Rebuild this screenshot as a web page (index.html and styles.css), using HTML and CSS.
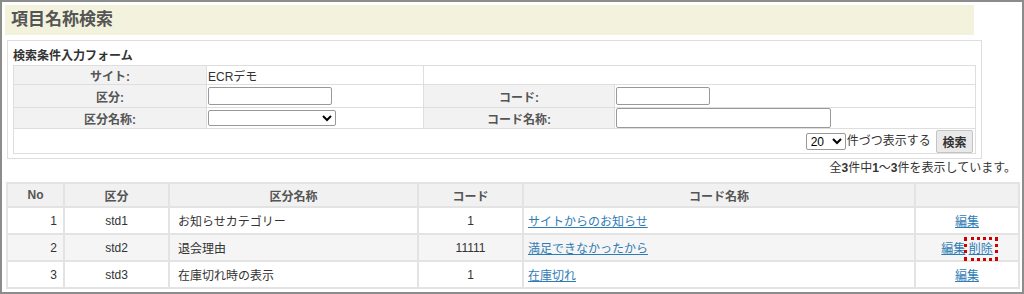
FILE: index.html
```html
<!DOCTYPE html>
<html lang="ja">
<head>
    <meta charset="UTF-8">
    <title>項目名称検索</title>
    <link rel="stylesheet" href="styles.css">
</head>
<body>
    <div class="frame">
        <h1 class="page-title">項目名称検索</h1>

        <div class="search-box">
            <h2 class="search-title">検索条件入力フォーム</h2>
            <table class="form-table">
                <tr class="row-site">
                    <th class="c1">サイト:</th>
                    <td class="c2">ECRデモ</td>
                    <td class="c3" colspan="2"></td>
                </tr>
                <tr class="row-kubun">
                    <th>区分:</th>
                    <td><input type="text" class="in-kubun"></td>
                    <th class="c3">コード:</th>
                    <td><input type="text" class="in-code"></td>
                </tr>
                <tr class="row-name">
                    <th>区分名称:</th>
                    <td><select class="sel-name"><option></option></select></td>
                    <th>コード名称:</th>
                    <td><input type="text" class="in-codename"></td>
                </tr>
                <tr class="row-submit">
                    <td colspan="4" class="submit-cell">
                        <select class="sel-count"><option>20</option></select>件づつ表示する
                        <button class="btn-search">検索</button>
                    </td>
                </tr>
            </table>
        </div>

        <div class="count">全<b>3</b>件中<b>1</b>〜<b>3</b>件を表示しています。</div>

        <table class="list">
            <tr>
                <th class="col-no">No</th>
                <th class="col-kubun">区分</th>
                <th class="col-kname">区分名称</th>
                <th class="col-code">コード</th>
                <th class="col-cname">コード名称</th>
                <th class="col-act"></th>
            </tr>
            <tr>
                <td class="num">1</td>
                <td class="mid">std1</td>
                <td class="name">お知らせカテゴリー</td>
                <td class="mid">1</td>
                <td class="link"><a href="#">サイトからのお知らせ</a></td>
                <td class="mid"><a href="#">編集</a></td>
            </tr>
            <tr class="alt">
                <td class="num">2</td>
                <td class="mid">std2</td>
                <td class="name">退会理由</td>
                <td class="mid">11111</td>
                <td class="link"><a href="#">満足できなかったから</a></td>
                <td class="mid"><a href="#">編集</a> <a href="#" class="marked">削除</a></td>
            </tr>
            <tr>
                <td class="num">3</td>
                <td class="mid">std3</td>
                <td class="name">在庫切れ時の表示</td>
                <td class="mid">1</td>
                <td class="link"><a href="#">在庫切れ</a></td>
                <td class="mid"><a href="#">編集</a></td>
            </tr>
        </table>
    </div>
</body>
</html>
```

FILE: styles.css
```css
body {
    margin: 0;
    font-family: "Liberation Sans", "Noto Sans CJK JP", sans-serif;
    font-size: 12px;
    color: #333;
    background: white;
}
.frame {
    height: 294px;
    box-sizing: border-box;
    border: 2px solid #8c8c8c;
    overflow: hidden;
}
.page-title {
    margin: 3px 48px 0 3px;
    height: 30px;
    line-height: 30px;
    padding-left: 6px;
    background: #f3f3dd;
    color: #555;
    font-size: 17px;
    font-weight: bold;
}
.search-box {
    margin: 5px 40px 0 5px;
    border: 1px solid #dedede;
    padding: 6px 4px 4px 5px;
}
.search-title {
    margin: 0;
    font-size: 12px;
    line-height: 18px;
    font-weight: bold;
    color: #333;
}
.form-table {
    width: 963px;
    border-collapse: collapse;
}
.form-table th,
.form-table td {
    border: 1px solid #dedede;
    padding: 0 1px;
    font-size: 12px;
}
.form-table th {
    background: #f2f2f2;
    color: #555;
    font-weight: bold;
    text-align: center;
}
.form-table .c1 { width: 190px; }
.form-table .c2 { width: 214px; }
.form-table .c3 { width: 188px; }
.row-site { height: 19px; }
.row-kubun { height: 23px; }
.row-name { height: 21px; }
.row-submit { height: 25px; }
.form-table input {
    margin: 0;
    height: 18px;
    box-sizing: border-box;
    border: 1px solid #999;
    border-radius: 2px;
    vertical-align: middle;
}
.in-kubun { width: 124px; }
.in-code { width: 94px; }
.in-codename { width: 215px; height: 20px !important; }
.sel-name {
    width: 128px;
    height: 16px;
    margin: 0;
    font-size: 11px;
    border: 1px solid #999;
    border-radius: 2px;
    background: white;
    vertical-align: middle;
}
.submit-cell {
    text-align: right;
    padding-right: 2px !important;
}
.sel-count {
    width: 40px;
    height: 17px;
    margin: 0 1px 0 0;
    padding: 0;
    font-size: 12px;
    font-family: "Liberation Sans", sans-serif;
    border: 1px solid #999;
    border-radius: 2px;
    background: white;
    vertical-align: middle;
}
.btn-search {
    width: 37px;
    height: 23px;
    margin-left: 2px;
    padding: 0;
    font-family: "Liberation Sans", "Noto Sans CJK JP", sans-serif;
    font-size: 12px;
    font-weight: bold;
    color: #333;
    background: #e9e9e9;
    border: 1px solid #c4c4c4;
    border-radius: 2px;
    vertical-align: middle;
}
.count {
    margin: 1px 6px 0 0;
    text-align: right;
    line-height: 16px;
}
.count b { font-weight: bold; }
.list {
    margin: 6px 0 0 4px;
    width: 1012px;
    border-collapse: collapse;
    table-layout: fixed;
}
.list th,
.list td {
    border: 2px solid #e3e3e3;
    padding: 0;
}
.list th {
    height: 22px;
    background: #f1f1f1;
    color: #555;
    font-weight: bold;
}
.list td {
    height: 25px;
}
.list .alt td { background: #f5f5f5; }
.col-no { width: 55px; }
.col-kubun { width: 103px; }
.col-kname { width: 247px; }
.col-code { width: 103px; }
.col-cname { width: 390px; }
.col-act { width: 102px; }
.list .num { text-align: right; padding-right: 6px; }
.list .mid { text-align: center; }
.list .name { padding-left: 8px; }
.list .link { padding-left: 4px; }
.list a {
    color: #2f7cb4;
    text-decoration: underline;
}
.marked {
    outline: 3px dotted #d00000;
    outline-offset: 2px;
}
```
